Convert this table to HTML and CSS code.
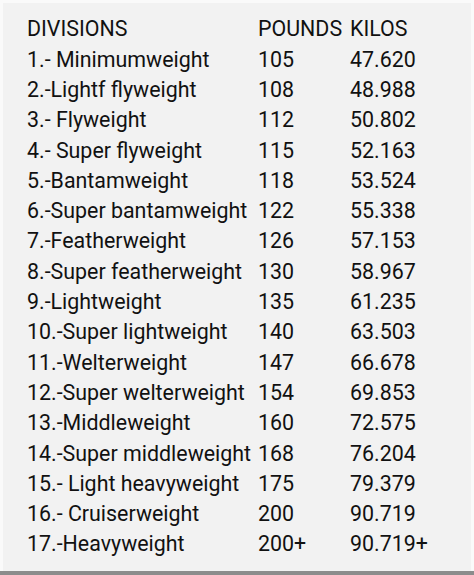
FILE: index.html
```html
<!DOCTYPE html>
<html>
<head>
<meta charset="utf-8">
<link rel="stylesheet" href="styles.css">
</head>
<body>
<div class="screen">
  <div class="table">
    <div class="row"><span>DIVISIONS</span><span>POUNDS</span><span>KILOS</span></div>
    <div class="row"><span>1.- Minimumweight</span><span>105</span><span>47.620</span></div>
    <div class="row"><span>2.-Lightf flyweight</span><span>108</span><span>48.988</span></div>
    <div class="row"><span>3.- Flyweight</span><span>112</span><span>50.802</span></div>
    <div class="row"><span>4.- Super flyweight</span><span>115</span><span>52.163</span></div>
    <div class="row"><span>5.-Bantamweight</span><span>118</span><span>53.524</span></div>
    <div class="row"><span>6.-Super bantamweight</span><span>122</span><span>55.338</span></div>
    <div class="row"><span>7.-Featherweight</span><span>126</span><span>57.153</span></div>
    <div class="row"><span>8.-Super featherweight</span><span>130</span><span>58.967</span></div>
    <div class="row"><span>9.-Lightweight</span><span>135</span><span>61.235</span></div>
    <div class="row"><span>10.-Super lightweight</span><span>140</span><span>63.503</span></div>
    <div class="row"><span>11.-Welterweight</span><span>147</span><span>66.678</span></div>
    <div class="row"><span>12.-Super welterweight</span><span>154</span><span>69.853</span></div>
    <div class="row"><span>13.-Middleweight</span><span>160</span><span>72.575</span></div>
    <div class="row"><span>14.-Super middleweight</span><span>168</span><span>76.204</span></div>
    <div class="row"><span>15.- Light heavyweight</span><span>175</span><span>79.379</span></div>
    <div class="row"><span>16.- Cruiserweight</span><span>200</span><span>90.719</span></div>
    <div class="row"><span>17.-Heavyweight</span><span>200+</span><span>90.719+</span></div>
  </div>
</div>
<div class="bar"></div>
</body>
</html>
```
FILE: styles.css
```css
html, body {
  margin: 0;
  padding: 0;
}
body {
  width: 474px;
  height: 575px;
  background: #fafafa;
  display: flex;
  flex-direction: column;
  overflow: hidden;
}
.screen {
  flex: 1;
  margin: 3px 3px 0 3px;
  background: #f2f2f2;
  padding: 11.4px 0 0 24px;
}
.table {
  font-family: Roboto, "Liberation Sans", sans-serif;
  font-size: 21.4px;
  color: #111;
}
.row {
  display: grid;
  grid-template-columns: 231px 92px auto;
  line-height: 30.3px;
  white-space: nowrap;
}
.bar {
  height: 4px;
  background: #8c8c8c;
}
```
